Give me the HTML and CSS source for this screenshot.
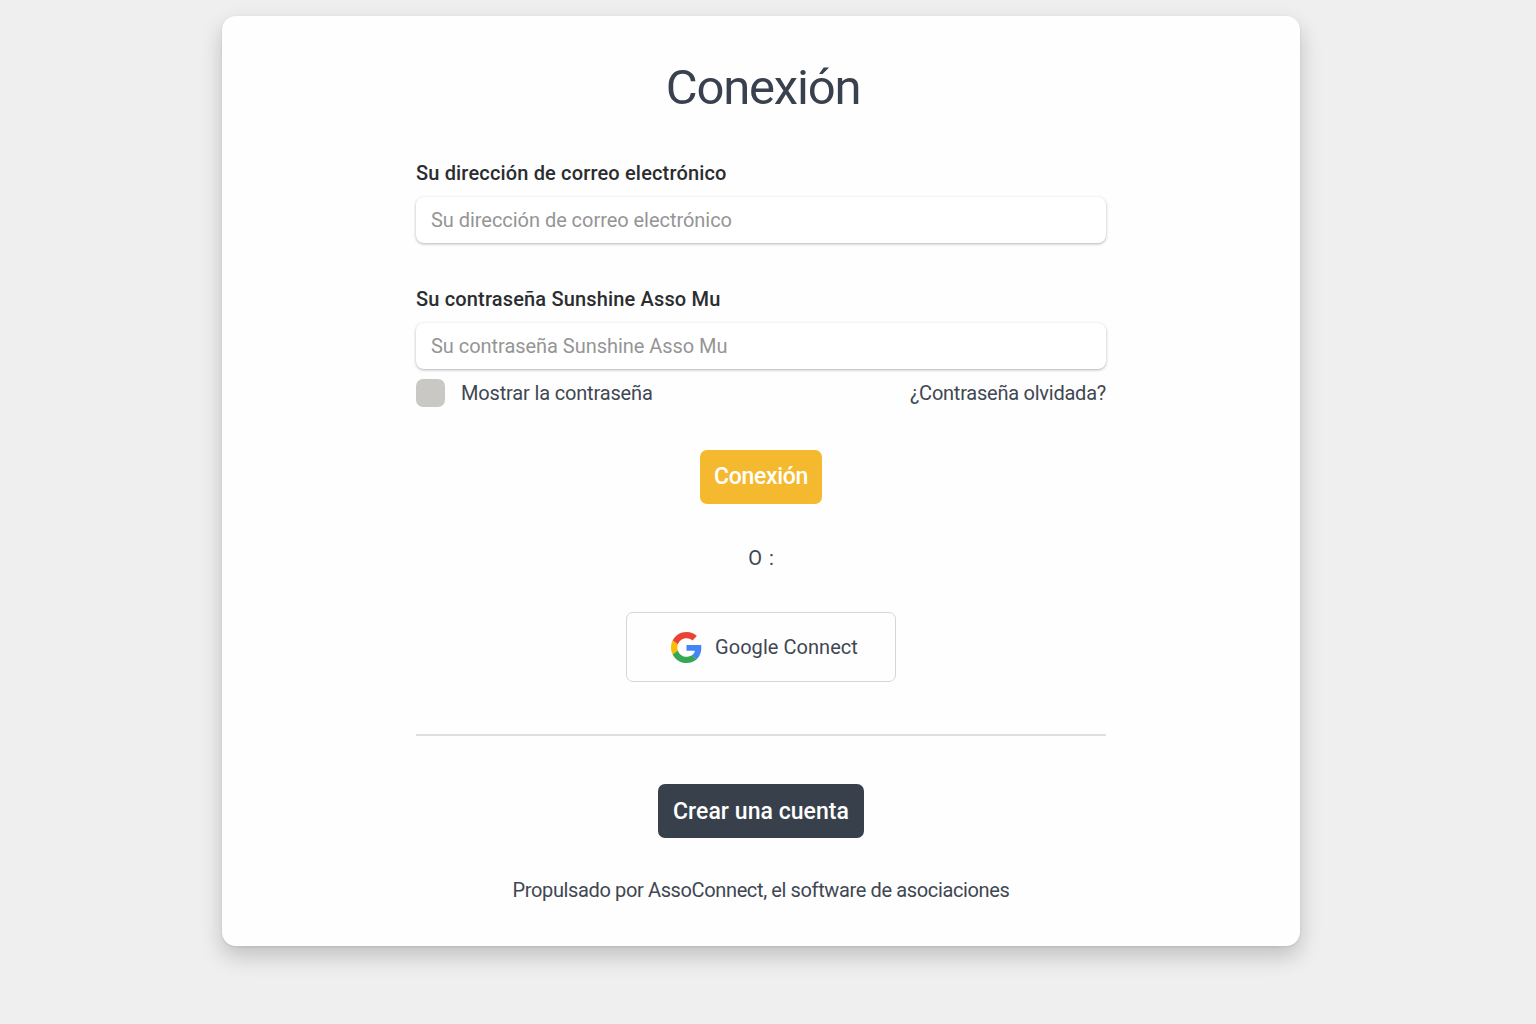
FILE: index.html
```html
<!DOCTYPE html>
<html lang="es">
<head>
    <meta charset="UTF-8">
    <meta name="viewport" content="width=device-width, initial-scale=1.0">
    <title>Conexión</title>
    <link rel="stylesheet" href="styles.css">
</head>
<body>
    <main class="card">
        <h1>Conexión</h1>

        <form class="login-form">
            <div class="form-group">
                <label for="email">Su dirección de correo electrónico</label>
                <input type="email" id="email" placeholder="Su dirección de correo electrónico">
            </div>

            <div class="form-group">
                <label for="password">Su contraseña Sunshine Asso Mu</label>
                <input type="password" id="password" placeholder="Su contraseña Sunshine Asso Mu">
            </div>

            <div class="options">
                <label class="show-password">
                    <input type="checkbox">
                    <span>Mostrar la contraseña</span>
                </label>
                <a href="#" class="forgot">¿Contraseña olvidada?</a>
            </div>

            <button type="submit" class="btn btn-primary">Conexión</button>
        </form>

        <p class="separator">O :</p>

        <a href="#" class="google-btn">
            <svg class="google-logo" viewBox="0 0 48 48" aria-hidden="true">
                <path fill="#EA4335" d="M24 9.5c3.54 0 6.71 1.22 9.21 3.6l6.85-6.85C35.9 2.38 30.47 0 24 0 14.62 0 6.51 5.38 2.56 13.22l7.98 6.19C12.43 13.72 17.74 9.5 24 9.5z"/>
                <path fill="#4285F4" d="M46.98 24.55c0-1.57-.15-3.09-.38-4.55H24v9.02h12.94c-.58 2.96-2.26 5.48-4.78 7.18l7.73 6c4.51-4.18 7.09-10.36 7.09-17.65z"/>
                <path fill="#FBBC05" d="M10.53 28.59c-.48-1.45-.76-2.99-.76-4.59s.27-3.14.76-4.59l-7.98-6.19C.92 16.46 0 20.12 0 24c0 3.88.92 7.54 2.56 10.78l7.97-6.19z"/>
                <path fill="#34A853" d="M24 48c6.48 0 11.93-2.13 15.89-5.81l-7.73-6c-2.15 1.45-4.92 2.3-8.16 2.3-6.26 0-11.57-4.22-13.47-9.91l-7.98 6.19C6.51 42.62 14.62 48 24 48z"/>
            </svg>
            <span>Google Connect</span>
        </a>

        <hr>

        <a href="#" class="btn btn-dark">Crear una cuenta</a>

        <p class="powered">Propulsado por AssoConnect, el software de asociaciones</p>
    </main>
</body>
</html>
```
FILE: styles.css
```css
* {
    box-sizing: border-box;
}
body {
    font-family: Roboto, sans-serif;
    font-size: 20px;
    line-height: 24px;
    margin: 0;
    min-height: 100vh;
    padding: 15.5px 0 0 222px;
    background-color: #efefef;
    color: #3f4752;
}
a {
    color: inherit;
    text-decoration: none;
}
.card {
    display: flex;
    flex-direction: column;
    align-items: center;
    width: 1078px;
    height: 930.5px;
    padding: 42.5px 194px 0;
    background: #fefefe;
    border-radius: 14px;
    box-shadow: 0 10px 22px rgba(0, 0, 0, 0.2), 0 1px 3px rgba(0, 0, 0, 0.08);
}
h1 {
    margin: 0 0 43px 4px;
    font-size: 49px;
    font-weight: 400;
    line-height: 60px;
    letter-spacing: -1.2px;
    color: #38414d;
}
.login-form {
    display: flex;
    flex-direction: column;
    align-items: center;
    width: 100%;
}
.form-group {
    width: 100%;
    margin-bottom: 44px;
}
.form-group + .form-group {
    margin-bottom: 9px;
}
.form-group label {
    display: block;
    margin-bottom: 12px;
    font-weight: 500;
    letter-spacing: 0.16px;
    color: #2b2d30;
}
.form-group input {
    display: block;
    width: 100%;
    height: 46px;
    padding: 0 15px;
    border: none;
    border-radius: 8px;
    background: #fff;
    font: inherit;
    letter-spacing: -0.04px;
    box-shadow: 0 1px 3px rgba(0, 0, 0, 0.3);
}
.form-group input::placeholder {
    color: #959595;
}
.options {
    display: flex;
    justify-content: space-between;
    align-items: center;
    width: 100%;
    height: 30px;
    margin-bottom: 42px;
}
.show-password {
    display: flex;
    align-items: center;
    gap: 16px;
    letter-spacing: -0.16px;
}
.show-password input {
    appearance: none;
    width: 29px;
    height: 28px;
    margin: 0;
    border-radius: 7px;
    background: #c9c8c4;
}
.forgot {
    letter-spacing: -0.24px;
}
.btn {
    height: 54px;
    padding: 0 15px;
    border: none;
    border-radius: 7px;
    color: #fff;
    font-family: inherit;
    font-size: 23px;
    font-weight: 500;
    line-height: 54px;
    cursor: pointer;
}
.btn-primary {
    padding: 0 14px;
    background: #f4b92e;
    letter-spacing: -0.3px;
}
.btn-dark {
    background: #38414b;
    line-height: 55px;
    letter-spacing: 0.05px;
}
.separator {
    margin: 42px 0;
    word-spacing: 2px;
}
.google-btn {
    display: flex;
    justify-content: center;
    align-items: center;
    gap: 13px;
    width: 270px;
    height: 70px;
    padding-left: 7px;
    border: 1px solid #d5d6d8;
    border-radius: 7px;
    letter-spacing: 0.05px;
}
.google-logo {
    width: 31px;
    height: 31px;
}
hr {
    width: 100%;
    height: 2px;
    margin: 52px 0 48px;
    border: none;
    background: #dfdfe1;
}
.powered {
    margin: 40px 0 0;
    letter-spacing: -0.37px;
}
```
